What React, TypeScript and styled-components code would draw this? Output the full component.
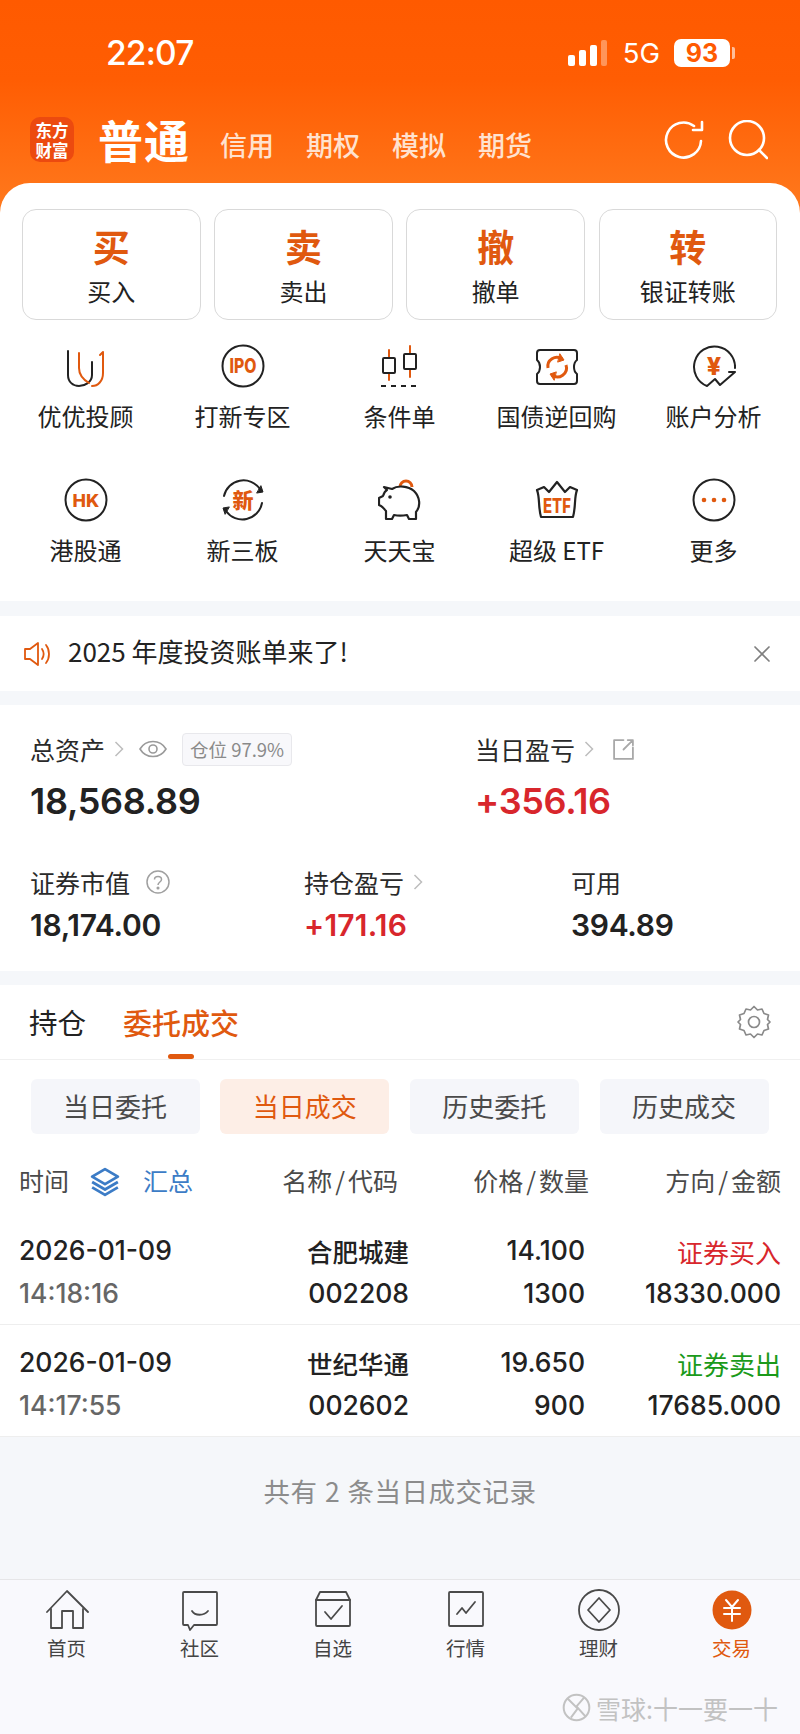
import React, { FC, ReactNode } from "react";
import styled, { createGlobalStyle } from "styled-components";

const ORANGE = "#e0590f";
const CJK = `"Noto Sans CJK SC", "Noto Sans", sans-serif`;
const NUM = `Inter, "Noto Sans CJK SC", sans-serif`;

const GlobalStyle = createGlobalStyle`
  html, body {
    margin: 0;
    padding: 0;
    background: #f5f7fa;
  }
  * {
    box-sizing: border-box;
  }
`;

const Page = styled.div`
  position: relative;
  width: 800px;
  height: 1734px;
  overflow: hidden;
  display: flex;
  flex-direction: column;
  background: #f5f7fa;
  font-family: ${CJK};
  color: #222;
`;

const TopShell = styled.div`
  background: linear-gradient(180deg, #ff5a00 0, #ff5d03 80px, #ff7a1e 215px) no-repeat;
  background-size: 100% 215px;
`;

const StatusBar = styled.div`
  height: 117px;
  padding: 40px 70px 51px 106px;
  display: flex;
  align-items: center;
  color: #fff;
`;

const Clock = styled.div`
  font-family: ${NUM};
  font-size: 33.5px;
  font-weight: 500;
  letter-spacing: -0.8px;
  flex: 1;
`;

const Network = styled.div`
  font-family: ${NUM};
  font-size: 27.5px;
  font-weight: 400;
  margin: 0 14px 0 15px;
`;

const Battery = styled.div`
  position: relative;
  width: 56px;
  height: 28px;
  border-radius: 7px;
  background: #fff;
  color: #ff5a00;
  font-family: ${NUM};
  font-size: 25px;
  font-weight: 700;
  line-height: 28px;
  text-align: center;
  &::after {
    content: "";
    position: absolute;
    right: -5px;
    top: 8px;
    width: 3px;
    height: 12px;
    border-radius: 0 2px 2px 0;
    background: rgba(255, 255, 255, 0.6);
  }
`;

const HeaderRow = styled.div`
  height: 66px;
  padding: 0 32px 21px 30px;
  display: flex;
  align-items: center;
`;

const Logo = styled.div`
  width: 44px;
  height: 45px;
  border-radius: 10px;
  background: #ec4a0f;
  color: #fff;
  font-size: 16.5px;
  font-weight: 700;
  line-height: 20px;
  text-align: center;
  padding-top: 3px;
`;

const AccountType = styled.div`
  margin-left: 24px;
  font-size: 45px;
  font-weight: 700;
  line-height: 50px;
  color: #fff;
  letter-spacing: 1px;
  white-space: nowrap;
`;

const AccountTabs = styled.div`
  display: flex;
  gap: 32px;
  margin-left: 30px;
  padding-top: 11px;
  flex: 1;
`;

const AccountTab = styled.div`
  font-size: 27px;
  font-weight: 500;
  line-height: 34px;
  color: #ffe2cf;
`;

const HeaderIcons = styled.div`
  display: flex;
  gap: 24px;
  align-items: center;
`;

const Card = styled.div`
  background: #fff;
  border-radius: 30px 30px 0 0;
  padding-top: 26px;
`;

const TradeButtons = styled.div`
  display: grid;
  grid-template-columns: repeat(4, 178.5px);
  column-gap: 13.7px;
  padding: 0 22px;
`;

const TradeButton = styled.div`
  height: 111px;
  border: 1px solid #d9d9d9;
  border-radius: 14px;
  display: flex;
  flex-direction: column;
  align-items: center;
  padding-top: 12px;
`;

const TradeGlyph = styled.div`
  font-size: 37px;
  font-weight: 700;
  line-height: 48px;
  color: ${ORANGE};
`;

const TradeLabel = styled.div`
  font-size: 24px;
  line-height: 34px;
  margin-top: 4px;
  color: #222;
`;

const QuickGrid = styled.div`
  display: grid;
  grid-template-columns: repeat(5, 157px);
  grid-auto-rows: 123px;
  row-gap: 11px;
  padding: 24px 7px 0;
`;

const QuickItem = styled.div`
  display: flex;
  flex-direction: column;
  align-items: center;
`;

const QuickLabel = styled.div`
  font-size: 24px;
  line-height: 30px;
  margin-top: 11px;
  color: #222;
  white-space: nowrap;
`;

const Notice = styled.div`
  margin-top: 15px;
  height: 75px;
  background: #fff;
  display: flex;
  align-items: center;
  padding: 0 29px 0 23px;
`;

const NoticeText = styled.div`
  margin-left: 17px;
  flex: 1;
  font-size: 26px;
  margin-top: -6px;
  color: #222;
`;

const Assets = styled.div`
  margin-top: 14px;
  height: 266px;
  background: #fff;
  padding: 27px 0 0 30px;
`;

const AssetTop = styled.div`
  display: grid;
  grid-template-columns: 445px 1fr;
`;

const AssetBottom = styled.div`
  display: grid;
  grid-template-columns: 274px 267px 1fr;
  margin-top: 44px;
`;

const AssetLabel = styled.div`
  height: 34px;
  display: flex;
  align-items: center;
  font-size: 25px;
  line-height: 34px;
  color: #2a2a2a;
  white-space: nowrap;
`;

const AssetValue = styled.div<{ $large?: boolean; $up?: boolean }>`
  font-family: ${NUM};
  font-size: ${(p) => (p.$large ? 36 : 30)}px;
  font-weight: 600;
  letter-spacing: ${(p) => (p.$up && !p.$large ? 0.2 : -0.3)}px;
  line-height: ${(p) => (p.$large ? 40 : 36)}px;
  margin-top: ${(p) => (p.$large ? 15 : 8)}px;
  color: ${(p) => (p.$up ? "#d8262c" : "#222")};
`;

const PositionPill = styled.div`
  margin-left: 15px;
  height: 33px;
  padding: 0 7px;
  display: flex;
  align-items: center;
  border: 1px solid #e8e8ec;
  border-radius: 4px;
  background: #f8f8fb;
  color: #8a8a8a;
  font-size: 18.5px;
`;

const Trades = styled.div`
  margin-top: 14px;
  background: #fff;
`;

const Tabs = styled.div`
  height: 75px;
  border-bottom: 1px solid #f0f0f0;
  padding: 0 29px 0 29px;
  display: flex;
  align-items: center;
  gap: 37px;
`;

const Tab = styled.div<{ $active?: boolean }>`
  position: relative;
  font-size: ${(p) => (p.$active ? 29 : 28.5)}px;
  font-weight: ${(p) => (p.$active ? 500 : 400)};
  line-height: 40px;
  color: ${(p) => (p.$active ? ORANGE : "#222")};
  &::after {
    content: "";
    display: ${(p) => (p.$active ? "block" : "none")};
    position: absolute;
    left: 50%;
    margin-left: -13px;
    bottom: -17px;
    width: 26px;
    height: 5px;
    border-radius: 3px;
    background: ${ORANGE};
  }
`;

const TabSpacer = styled.div`
  flex: 1;
`;

const Chips = styled.div`
  display: grid;
  grid-template-columns: repeat(4, 169px);
  column-gap: 20.7px;
  padding: 19px 0 0 30.5px;
`;

const Chip = styled.div<{ $active?: boolean }>`
  height: 55px;
  border-radius: 6px;
  background: ${(p) => (p.$active ? "#fdeee6" : "#f5f6fa")};
  color: ${(p) => (p.$active ? ORANGE : "#4a4a4a")};
  font-size: 26px;
  line-height: 54px;
  text-align: center;
`;

const ColumnHead = styled.div`
  display: grid;
  grid-template-columns: 245px 134px 191px 192px;
  padding: 0 19px;
  margin-top: 29px;
  height: 34px;
  font-size: 25px;
  line-height: 34px;
  color: #4a4a4a;
  white-space: nowrap;
`;

const HeadFirst = styled.div`
  display: flex;
  align-items: center;
`;

const HeadRight = styled.div`
  text-align: right;
`;

const Slash = styled.span`
  margin: 0 3px;
`;

const Summary = styled.span`
  color: #3c7cc6;
  margin-left: 23px;
`;

const Rows = styled.div`
  margin-top: 16px;
`;

const Row = styled.div`
  height: 112px;
  border-bottom: 1px solid #eee;
  padding: 16px 19px 0 19px;
  display: grid;
  grid-template-columns: 245px 145px 176px 196px;
  font-family: ${NUM};
`;

const Cell = styled.div<{ $right?: boolean }>`
  text-align: ${(p) => (p.$right ? "right" : "left")};
`;

const Line = styled.div<{ $muted?: boolean }>`
  height: 43px;
  font-size: 26.5px;
  font-weight: 500;
  line-height: 43px;
  color: ${(p) => (p.$muted ? "#666" : "#222")};
  white-space: nowrap;
`;

const NameLine = styled.div`
  height: 43px;
  font-family: ${CJK};
  font-size: 25.5px;
  font-weight: 500;
  line-height: 43px;
  color: #222;
  white-space: nowrap;
`;

const Direction = styled.div<{ $buy?: boolean }>`
  height: 43px;
  font-family: ${CJK};
  font-size: 26px;
  line-height: 45px;
  color: ${(p) => (p.$buy ? "#d8262c" : "#1a9a1a")};
  white-space: nowrap;
`;

const Empty = styled.div`
  flex: 1;
  padding-top: 34px;
  text-align: center;
  font-size: 26.5px;
  letter-spacing: 0.5px;
  word-spacing: 1px;
  line-height: 40px;
  color: #8c8c8c;
`;

const TabBar = styled.div`
  height: 155px;
  border-top: 1px solid #e6e6e8;
  background: #f9f9fd;
  display: grid;
  grid-template-columns: repeat(6, 1fr);
  padding: 9px 2px 0 0;
  flex-shrink: 0;
`;

const BarItem = styled.div`
  display: flex;
  flex-direction: column;
  align-items: center;
`;

const BarLabel = styled.div<{ $active?: boolean }>`
  font-size: 19.5px;
  line-height: 24px;
  margin-top: 5px;
  color: ${(p) => (p.$active ? ORANGE : "#444")};
`;

const Watermark = styled.div`
  position: absolute;
  right: 22px;
  bottom: 12px;
  display: flex;
  align-items: center;
  gap: 5px;
  color: #c2c2c2;
  font-size: 25px;
  line-height: 28px;
  white-space: nowrap;
`;

const iconProps = {
  fill: "none",
  strokeLinecap: "round" as const,
  strokeLinejoin: "round" as const,
};

const QuickIcon: FC<{ children: ReactNode }> = ({ children }) => (
  <svg width="44" height="46" viewBox="0 0 44 46" {...iconProps} stroke="#222" strokeWidth="2">
    {children}
  </svg>
);

const IconText: FC<{ size: number; y?: number; fit?: number; children: ReactNode }> = ({ size, y = 29, fit, children }) => (
  <text
    x="22"
    y={y}
    textAnchor="middle"
    fill={ORANGE}
    stroke="none"
    fontFamily={`Inter, "Noto Sans CJK SC", sans-serif`}
    fontWeight="800"
    fontSize={size}
    textLength={fit}
    lengthAdjust={fit ? "spacingAndGlyphs" : undefined}
  >
    {children}
  </text>
);

const quickItems: { label: string; icon: ReactNode }[] = [
  {
    label: "优优投顾",
    icon: (
      <>
        <path d="M4 7V31C4 38 9 42 15 42C21 42 28 38 28 31V18" />
        <path d="M15 9V24C15 32 20 36 25 39" stroke={ORANGE} />
        <path d="M36 11L39 8V29C39 37 34 42 28 42" stroke={ORANGE} />
      </>
    ),
  },
  {
    label: "打新专区",
    icon: (
      <>
        <circle cx="22" cy="22" r="20.5" />
        <IconText size={20} y={29} fit={27}>IPO</IconText>
      </>
    ),
  },
  {
    label: "条件单",
    icon: (
      <>
        <path d="M11 6V36M32 2V33" stroke={ORANGE} />
        <rect x="5" y="14" width="12" height="15" rx="1" fill="#fff" />
        <rect x="26" y="10" width="12" height="15" rx="1" fill="#fff" />
        <path d="M3 42H41" strokeDasharray="5 5" strokeLinecap="butt" />
      </>
    ),
  },
  {
    label: "国债逆回购",
    icon: (
      <>
        <path d="M5 6H39A3 3 0 0 1 42 9V16C38 19 38 27 42 30V37A3 3 0 0 1 39 40H5A3 3 0 0 1 2 37V30C6 27 6 19 2 16V9A3 3 0 0 1 5 6Z" />
        <path d="M13 24A9 9 0 0 1 27 15M31 21A9 9 0 0 1 17 31" stroke={ORANGE} strokeWidth="3" strokeLinecap="butt" />
        <path d="M25 10L29 16L23 18ZM19 36L15 30L21 28Z" stroke={ORANGE} fill={ORANGE} strokeWidth="1" />
      </>
    ),
  },
  {
    label: "账户分析",
    icon: (
      <>
        <path d="M43 24A20.5 20.5 0 1 0 15 42L23 35L28 41L43 28H37" />
        <IconText size={25} y={31}>¥</IconText>
      </>
    ),
  },
  {
    label: "港股通",
    icon: (
      <>
        <circle cx="22" cy="22" r="20.5" />
        <IconText size={18} y={28.5}>HK</IconText>
      </>
    ),
  },
  {
    label: "新三板",
    icon: (
      <>
        <path d="M3 18A20 20 0 0 1 39 11" />
        <path d="M41 25A20 20 0 0 1 5 33" />
        <path d="M36 15L42 14L40 8ZM8 29L2 30L4 36Z" fill="#222" strokeWidth="1" />
        <IconText size={21} y={30}>新</IconText>
      </>
    ),
  },
  {
    label: "天天宝",
    icon: (
      <>
        <path d="M22 9A5.8 5.8 0 0 1 34 9" stroke={ORANGE} strokeWidth="3" strokeLinecap="butt" />
        <path d="M6 9L14 11C20 7 30 8 36 13C42 19 43 28 38 34V41H31L29 37C24 38 20 38 16 37L14 41H8L8 33C6 31 5 29 3 28L1 27V20L5 18C6 15 7 13 9 12Z" strokeWidth="2.2" />
        <circle cx="12" cy="19" r="1.8" fill="#222" stroke="none" />
      </>
    ),
  },
  {
    label: "超级 ETF",
    icon: (
      <>
        <path d="M2 12L9 9L14 14L22 4L30 14L35 9L42 12C39 20 41 28 38 39H6C3 28 5 20 2 12Z" strokeWidth="2.2" />
        <IconText size={20} y={35} fit={28}>ETF</IconText>
      </>
    ),
  },
  {
    label: "更多",
    icon: (
      <>
        <circle cx="22" cy="22" r="20.5" />
        <circle cx="12" cy="22" r="2.3" fill={ORANGE} stroke="none" />
        <circle cx="22" cy="22" r="2.3" fill={ORANGE} stroke="none" />
        <circle cx="32" cy="22" r="2.3" fill={ORANGE} stroke="none" />
      </>
    ),
  },
];

const BarIcon: FC<{ children: ReactNode }> = ({ children }) => (
  <svg width="44" height="42" viewBox="0 0 44 42" {...iconProps} stroke="#4a4a4a" strokeWidth="1.8">
    {children}
  </svg>
);

const barItems: { label: string; active?: boolean; icon: ReactNode }[] = [
  {
    label: "首页",
    icon: (
      <>
        <path d="M2 23L22 2L43 23" />
        <path d="M6 20V39H17V22H28V39H38V20" />
      </>
    ),
  },
  {
    label: "社区",
    icon: (
      <>
        <path d="M6 3H38A1 1 0 0 1 39 4V35A1 1 0 0 1 38 36H16L12 41L10 36H6A1 1 0 0 1 5 35V4A1 1 0 0 1 6 3Z" />
        <path d="M14 22C17 27 26 27 30 22" />
      </>
    ),
  },
  {
    label: "自选",
    icon: (
      <>
        <path d="M5 36V11L9 3H35L39 11V36A1 1 0 0 1 38 37H6A1 1 0 0 1 5 36Z" />
        <path d="M5 11H39" />
        <path d="M14 23L20 30L31 17" />
      </>
    ),
  },
  {
    label: "行情",
    icon: (
      <>
        <rect x="5" y="3" width="34" height="34" rx="1" />
        <path d="M13 25L18 19L22 24L31 13" />
      </>
    ),
  },
  {
    label: "理财",
    icon: (
      <>
        <ellipse cx="22" cy="21" rx="20" ry="20" />
        <path d="M22 9L33 21L22 33L11 21Z" />
      </>
    ),
  },
  {
    label: "交易",
    active: true,
    icon: (
      <>
        <circle cx="22" cy="21" r="19.5" fill={ORANGE} stroke="none" />
        <path d="M16 11L22 18L28 11M14 19H30M14 25H30M22 18V32" stroke="#fff" strokeWidth="2" />
      </>
    ),
  },
];

const Chevron: FC = () => (
  <svg width="10" height="18" viewBox="0 0 10 18" fill="none" stroke="#bdbdbd" strokeWidth="1.5" style={{ marginLeft: 9 }}>
    <path d="M1.5 2L8.5 9L1.5 16" />
  </svg>
);

const headCols: [string, string][] = [
  ["名称", "代码"],
  ["价格", "数量"],
  ["方向", "金额"],
];

export default function App() {
  return (
    <Page>
      <GlobalStyle />
      <TopShell>
        <StatusBar>
          <Clock>22:07</Clock>
          <svg width="40" height="26" viewBox="0 0 40 26" fill="#fff">
            <rect x="0" y="15" width="7" height="11" rx="2" />
            <rect x="11" y="10" width="7" height="16" rx="2" />
            <rect x="22" y="5" width="7" height="21" rx="2" />
            <rect x="33" y="0" width="6" height="26" rx="2" fill="rgba(255,255,255,0.35)" />
          </svg>
          <Network>5G</Network>
          <Battery>93</Battery>
        </StatusBar>
        <HeaderRow>
          <Logo>
            东方
            <br />
            财富
          </Logo>
          <AccountType>普通</AccountType>
          <AccountTabs>
            <AccountTab>信用</AccountTab>
            <AccountTab>期权</AccountTab>
            <AccountTab>模拟</AccountTab>
            <AccountTab>期货</AccountTab>
          </AccountTabs>
          <HeaderIcons>
            <svg width="40" height="40" viewBox="0 0 40 40" fill="none" stroke="#fff" strokeWidth="2.6" strokeLinecap="round" strokeLinejoin="round">
              <path d="M37 21A17.5 17.5 0 1 1 30 6" />
              <path d="M38 2V10H29" />
            </svg>
            <svg width="40" height="40" viewBox="0 0 40 40" fill="none" stroke="#fff" strokeWidth="2.6" strokeLinecap="round">
              <circle cx="19" cy="18" r="17" />
              <path d="M31 30L39 38" />
            </svg>
          </HeaderIcons>
        </HeaderRow>
        <Card>
          <TradeButtons>
            {[
              ["买", "买入"],
              ["卖", "卖出"],
              ["撤", "撤单"],
              ["转", "银证转账"],
            ].map(([glyph, label]) => (
              <TradeButton key={label}>
                <TradeGlyph>{glyph}</TradeGlyph>
                <TradeLabel>{label}</TradeLabel>
              </TradeButton>
            ))}
          </TradeButtons>
          <QuickGrid>
            {quickItems.map((item) => (
              <QuickItem key={item.label}>
                <QuickIcon>{item.icon}</QuickIcon>
                <QuickLabel>{item.label}</QuickLabel>
              </QuickItem>
            ))}
          </QuickGrid>
        </Card>
      </TopShell>

      <Notice>
        <svg width="28" height="26" viewBox="0 0 28 26" fill="none" stroke={ORANGE} strokeWidth="1.8" strokeLinejoin="round" strokeLinecap="round">
          <path d="M2 8H7L15 2V24L7 18H2Z" />
          <path d="M19 8C21 11 21 15 19 18M23 4C27 9 27 17 23 22" />
        </svg>
        <NoticeText>2025 年度投资账单来了!</NoticeText>
        <svg width="18" height="18" viewBox="0 0 18 18" stroke="#7f7f7f" strokeWidth="1.7" strokeLinecap="round">
          <path d="M2 2L16 16M16 2L2 16" />
        </svg>
      </Notice>

      <Assets>
        <AssetTop>
          <div>
            <AssetLabel>
              总资产
              <Chevron />
              <svg width="28" height="20" viewBox="0 0 28 20" fill="none" stroke="#9a9a9a" strokeWidth="1.6" style={{ marginLeft: 15 }}>
                <path d="M1 10C7 0 21 0 27 10C21 20 7 20 1 10Z" />
                <circle cx="14" cy="10" r="4" />
              </svg>
              <PositionPill>仓位 97.9%</PositionPill>
            </AssetLabel>
            <AssetValue $large>18,568.89</AssetValue>
          </div>
          <div>
            <AssetLabel>
              当日盈亏
              <Chevron />
              <svg width="23" height="23" viewBox="0 0 22 22" fill="none" stroke="#a8a8a8" strokeWidth="1.7" style={{ marginLeft: 18 }} strokeLinecap="round" strokeLinejoin="round">
                <path d="M11 2H2V20H20V9" />
                <path d="M11 11L20 2M15 2H20V7" />
              </svg>
            </AssetLabel>
            <AssetValue $large $up>+356.16</AssetValue>
          </div>
        </AssetTop>
        <AssetBottom>
          <div>
            <AssetLabel>
              证券市值
              <svg width="24" height="24" viewBox="0 0 24 24" fill="none" stroke="#a0a0a0" strokeWidth="1.5" style={{ marginLeft: 16 }}>
                <circle cx="12" cy="12" r="11" />
                <path d="M8.5 9.5C8.5 5.5 15.5 5.5 15.5 9.5C15.5 12 12 12 12 15" />
                <circle cx="12" cy="18" r="0.8" fill="#a0a0a0" />
              </svg>
            </AssetLabel>
            <AssetValue>18,174.00</AssetValue>
          </div>
          <div>
            <AssetLabel>
              持仓盈亏
              <Chevron />
            </AssetLabel>
            <AssetValue $up>+171.16</AssetValue>
          </div>
          <div>
            <AssetLabel>可用</AssetLabel>
            <AssetValue>394.89</AssetValue>
          </div>
        </AssetBottom>
      </Assets>

      <Trades>
        <Tabs>
          <Tab>持仓</Tab>
          <Tab $active>委托成交</Tab>
          <TabSpacer />
          <svg width="34" height="34" viewBox="0 0 34 34" fill="none" stroke="#8a8a8a" strokeWidth="1.7" strokeLinejoin="round">
            <path d="M17 1.5L20.5 5L25 4L27 8.5L31.5 10L30.5 14.5L33 17L30.5 19.5L31.5 24L27 25.5L25 30L20.5 29L17 32.5L13.5 29L9 30L7 25.5L2.5 24L3.5 19.5L1 17L3.5 14.5L2.5 10L7 8.5L9 4L13.5 5Z" />
            <circle cx="17" cy="17" r="5.5" />
          </svg>
        </Tabs>
        <Chips>
          <Chip>当日委托</Chip>
          <Chip $active>当日成交</Chip>
          <Chip>历史委托</Chip>
          <Chip>历史成交</Chip>
        </Chips>
        <ColumnHead>
          <HeadFirst>
            时间
            <svg width="30" height="30" viewBox="0 0 28 28" fill="none" stroke="#3c7cc6" strokeWidth="2.6" strokeLinejoin="round" style={{ marginLeft: 21, marginTop: 4 }}>
              <path d="M14 2L26 9L14 16L2 9Z" />
              <path d="M2 14L14 21L26 14M2 19L14 26L26 19" />
            </svg>
            <Summary>汇总</Summary>
          </HeadFirst>
          {headCols.map(([a, b]) => (
            <HeadRight key={a}>
              {a}
              <Slash>/</Slash>
              {b}
            </HeadRight>
          ))}
        </ColumnHead>
        <Rows>
          <Row>
            <Cell>
              <Line>2026-01-09</Line>
              <Line $muted>14:18:16</Line>
            </Cell>
            <Cell $right>
              <NameLine>合肥城建</NameLine>
              <Line>002208</Line>
            </Cell>
            <Cell $right>
              <Line>14.100</Line>
              <Line>1300</Line>
            </Cell>
            <Cell $right>
              <Direction $buy>证券买入</Direction>
              <Line>18330.000</Line>
            </Cell>
          </Row>
          <Row>
            <Cell>
              <Line>2026-01-09</Line>
              <Line $muted>14:17:55</Line>
            </Cell>
            <Cell $right>
              <NameLine>世纪华通</NameLine>
              <Line>002602</Line>
            </Cell>
            <Cell $right>
              <Line>19.650</Line>
              <Line>900</Line>
            </Cell>
            <Cell $right>
              <Direction>证券卖出</Direction>
              <Line>17685.000</Line>
            </Cell>
          </Row>
        </Rows>
      </Trades>

      <Empty>共有 2 条当日成交记录</Empty>

      <TabBar>
        {barItems.map((item) => (
          <BarItem key={item.label}>
            <BarIcon>{item.icon}</BarIcon>
            <BarLabel $active={item.active}>{item.label}</BarLabel>
          </BarItem>
        ))}
      </TabBar>

      <Watermark>
        <svg width="29" height="29" viewBox="0 0 26 26" fill="none" stroke="#c2c2c2" strokeWidth="1.8">
          <circle cx="13" cy="13" r="11.5" />
          <path d="M5 5L14 14L8 22M20 4L13 12L21 21" />
        </svg>
        雪球:十一要一十
      </Watermark>
    </Page>
  );
}
